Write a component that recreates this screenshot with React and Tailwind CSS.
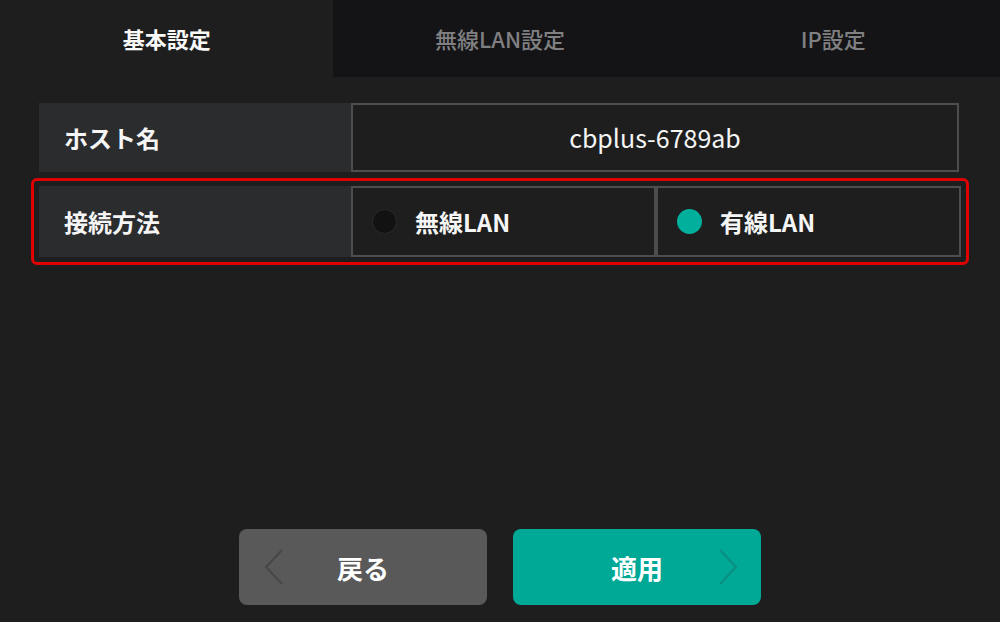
const font = { fontFamily: '"Noto Sans CJK JP", "Noto Sans", sans-serif' };

const tabs = [
    { id: 'basic', label: '基本設定', active: true },
    { id: 'wlan', label: '無線LAN設定' },
    { id: 'ip', label: 'IP設定' },
];

const Chevron = ({ dir, className }) => (
    <svg width="20" height="36" viewBox="0 0 20 36" className={className}>
        <path
            d={dir === 'left' ? 'M18 1 L2 18 L18 35' : 'M2 1 L18 18 L2 35'}
            fill="none"
            stroke="currentColor"
            strokeWidth="2"
        />
    </svg>
);

const Radio = ({ checked, label }) => (
    <div className="flex-1 flex items-center border-2 border-[#4d4d4d] bg-[#1e1e1e] pl-[19px]">
        <span
            className={`w-[25px] h-[25px] rounded-full ${
                checked ? 'bg-[#00b09c]' : 'bg-[#121212] border border-[#2a2a2a]'
            }`}
        />
        <span className="ml-[18px] text-[24px] font-bold text-[#f5f5f5]">{label}</span>
    </div>
);

export default function App() {
    return (
        <div className="w-[1000px] h-[622px] bg-[#1e1e1e] flex flex-col" style={font}>
            <div className="flex h-[77px]">
                {tabs.map((tab) => (
                    <div
                        key={tab.id}
                        className={`flex-1 flex items-center justify-center text-[22px] ${
                            tab.active
                                ? 'bg-[#1e1e1e] text-[#f8f8f8] font-bold'
                                : 'bg-[#141416] text-[#808082] font-medium'
                        }`}
                    >
                        {tab.label}
                    </div>
                ))}
            </div>

            <div className="px-[39px] pt-[26px] pr-[41px]">
                <div className="flex h-[69px]">
                    <div className="w-[312px] bg-[#2b2c2e] flex items-center pl-[25px] text-[24px] font-bold text-[#f5f5f5]">
                        ホスト名
                    </div>
                    <div className="flex-1 flex items-center justify-center border-2 border-[#4d4d4d] bg-[#1e1e1e] text-[25px] text-[#f5f5f5]">
                        cbplus-6789ab
                    </div>
                </div>
            </div>

            <div className="mx-[31px] mt-[6px] border-[3px] border-[#e00000] rounded-[6px] p-[5px]">
                <div className="flex h-[71px]">
                    <div className="w-[312px] bg-[#2b2c2e] flex items-center pl-[25px] text-[24px] font-bold text-[#f5f5f5]">
                        接続方法
                    </div>
                    <Radio label="無線LAN" />
                    <Radio checked label="有線LAN" />
                </div>
            </div>

            <div className="mt-auto mb-[17px] flex justify-center gap-[26px]">
                <button className="relative w-[248px] h-[76px] rounded-[8px] bg-[#595959] flex items-center justify-center text-[26px] font-bold text-white">
                    <Chevron dir="left" className="absolute left-[25px] top-[20px] text-[#474747]" />
                    戻る
                </button>
                <button className="relative w-[248px] h-[76px] rounded-[8px] bg-[#00a896] flex items-center justify-center text-[26px] font-bold text-white">
                    適用
                    <Chevron dir="right" className="absolute right-[23px] top-[20px] text-[#0b8e7f]" />
                </button>
            </div>
        </div>
    );
}
